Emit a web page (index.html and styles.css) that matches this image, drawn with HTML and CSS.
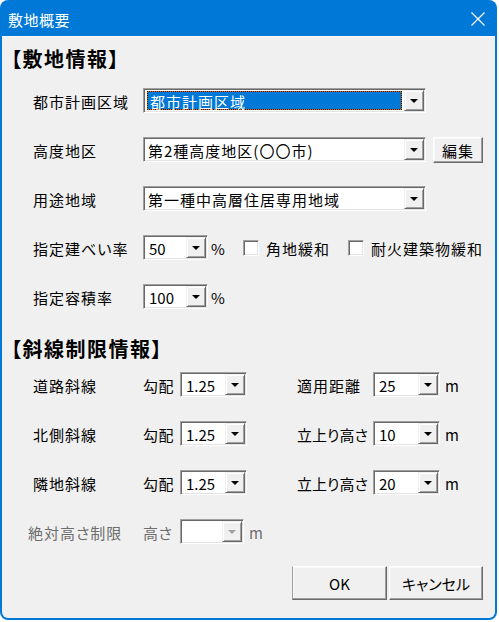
FILE: index.html
```html
<!DOCTYPE html>
<html lang="ja">
<head>
<meta charset="utf-8">
<title>敷地概要</title>
<link rel="stylesheet" href="styles.css">
</head>
<body>
<div class="window">
  <div class="titlebar">
    <span class="title">敷地概要</span>
    <svg class="close" viewBox="0 0 16 16"><path d="M1.5 1.5L14.5 14.5M14.5 1.5L1.5 14.5" stroke="#fff" stroke-width="1.2" fill="none"/></svg>
  </div>
  <div class="content">
    <div class="heading h1">【敷地情報】</div>
    <div class="section">
      <div class="row">
        <span class="label">都市計画区域</span>
        <div class="combo wide">
          <div class="field"><span class="sel">都市計画区域</span></div>
          <span class="drop"><i class="tri"></i></span>
        </div>
      </div>
      <div class="row">
        <span class="label">高度地区</span>
        <div class="combo wide">
          <div class="field"><span class="txt">第2種高度地区(〇〇市)</span></div>
          <span class="drop"><i class="tri"></i></span>
        </div>
        <button class="btn edit">編集</button>
      </div>
      <div class="row">
        <span class="label">用途地域</span>
        <div class="combo wide">
          <div class="field"><span class="txt">第一種中高層住居専用地域</span></div>
          <span class="drop"><i class="tri"></i></span>
        </div>
      </div>
      <div class="row">
        <span class="label">指定建べい率</span>
        <div class="combo small">
          <div class="field"><span class="num">50</span></div>
          <span class="drop"><i class="tri"></i></span>
        </div>
        <span class="pct">%</span>
        <span class="cb"></span><span class="cbtext">角地緩和</span>
        <span class="cb cb2"></span><span class="cbtext">耐火建築物緩和</span>
      </div>
      <div class="row">
        <span class="label">指定容積率</span>
        <div class="combo small">
          <div class="field"><span class="num">100</span></div>
          <span class="drop"><i class="tri"></i></span>
        </div>
        <span class="pct">%</span>
      </div>
    </div>

    <div class="heading h2">【斜線制限情報】</div>
    <div class="section">
      <div class="grid-row">
        <span class="label">道路斜線</span>
        <span class="sub">勾配</span>
        <div class="combo cell">
          <div class="field"><span class="num">1.25</span></div>
          <span class="drop"><i class="tri"></i></span>
        </div>
        <span></span>
        <span class="sub2">適用距離</span>
        <div class="combo cell">
          <div class="field"><span class="num">25</span></div>
          <span class="drop"><i class="tri"></i></span>
        </div>
        <span class="unit">m</span>
      </div>
      <div class="grid-row">
        <span class="label">北側斜線</span>
        <span class="sub">勾配</span>
        <div class="combo cell">
          <div class="field"><span class="num">1.25</span></div>
          <span class="drop"><i class="tri"></i></span>
        </div>
        <span></span>
        <span class="sub2 tight">立上り高さ</span>
        <div class="combo cell">
          <div class="field"><span class="num">10</span></div>
          <span class="drop"><i class="tri"></i></span>
        </div>
        <span class="unit">m</span>
      </div>
      <div class="grid-row">
        <span class="label">隣地斜線</span>
        <span class="sub">勾配</span>
        <div class="combo cell">
          <div class="field"><span class="num">1.25</span></div>
          <span class="drop"><i class="tri"></i></span>
        </div>
        <span></span>
        <span class="sub2 tight">立上り高さ</span>
        <div class="combo cell">
          <div class="field"><span class="num">20</span></div>
          <span class="drop"><i class="tri"></i></span>
        </div>
        <span class="unit">m</span>
      </div>
      <div class="grid-row disabled">
        <span class="label shift">絶対高さ制限</span>
        <span class="sub">高さ</span>
        <div class="combo cell narrow">
          <div class="field"></div>
          <span class="drop"><i class="tri"></i></span>
        </div>
        <span class="unit unit-near">m</span>
      </div>
    </div>

    <div class="buttons">
      <button class="btn ok">OK</button>
      <button class="btn cancel">キャンセル</button>
    </div>
  </div>
</div>
</body>
</html>
```

FILE: styles.css
```css
* { box-sizing: border-box; }
html, body { margin: 0; padding: 0; background: #ffffff; }
body {
  width: 499px;
  height: 622px;
  overflow: hidden;
  font-family: "Noto Sans CJK JP", "Noto Sans", sans-serif;
  font-size: 15px;
  color: #000;
  font-feature-settings: "palt";
}
.window {
  width: 497px;
  height: 620px;
  background: #0078d7;
  border-radius: 8px;
  padding: 0 2px 2px 2px;
  display: flex;
  flex-direction: column;
}
.titlebar {
  height: 36px;
  flex: none;
  display: flex;
  align-items: center;
  justify-content: space-between;
  padding: 0 9px 0 6px;
  color: #fff;
}
.title { font-size: 15px; letter-spacing: 0.5px; padding-top: 2px; }
.close { width: 16px; height: 16px; display: block; margin-top: 2px; }

.content {
  flex: 1;
  background: #f0f0f0;
  border-top: 1px solid #fafafa;
  border-radius: 0 0 6px 6px;
  padding: 8px 12px 0 31px;
  display: flex;
  flex-direction: column;
}
.heading {
  height: 28px;
  line-height: 28px;
  font-size: 20px;
  font-weight: 700;
  letter-spacing: 1.5px;
  margin-left: -22px;
}
.h1 { margin-bottom: 15px; }
.h2 { margin-top: 26px; margin-bottom: 9px; }
.section { display: flex; flex-direction: column; gap: 24px; }

.row { height: 25px; display: flex; align-items: center; }
.label { width: 110px; flex: none; letter-spacing: 1px; padding-top: 2px; }

.combo {
  height: 25px;
  flex: none;
  display: flex;
  background: #fff;
  border: 1px solid;
  border-color: #a0a0a0 #ffffff #ffffff #a0a0a0;
  box-shadow: inset 1px 1px 0 #696969, inset -1px -1px 0 #e3e3e3;
  padding: 1px;
}
.wide { width: 283px; }
.small { width: 65px; }
.cell { width: 67px; }
.narrow { width: 64px; }
.field {
  flex: 1;
  display: flex;
  align-items: center;
  padding: 1px 2px 1px 3px;
  min-width: 0;
  white-space: nowrap;
}
.txt { letter-spacing: 1px; padding-top: 1px; }
.num { padding-left: 1px; padding-top: 1px; }
.sel {
  flex: 1;
  align-self: stretch;
  display: flex;
  align-items: center;
  margin-left: -1px;
  padding: 1px 0 0 2px;
  color: #fff;
  letter-spacing: 1px;
  border: 1px dotted #2a1400;
  background: linear-gradient(#0078d7, #0078d7) padding-box, linear-gradient(#d2700f, #d2700f) border-box;
}
.drop {
  width: 20px;
  flex: none;
  display: flex;
  align-items: center;
  justify-content: center;
  background: #f0f0f0;
  border: 1px solid;
  border-color: #f0f0f0 #696969 #696969 #f0f0f0;
  box-shadow: inset 1px 1px 0 #ffffff, inset -1px -1px 0 #a0a0a0;
}
.tri {
  width: 0;
  height: 0;
  border-left: 4px solid transparent;
  border-right: 4px solid transparent;
  border-top: 4px solid #000;
}

.btn {
  font: inherit;
  color: #000;
  background: #f0f0f0;
  border: 1px solid;
  border-color: #ffffff #696969 #696969 #ffffff;
  box-shadow: inset -1px -1px 0 #a0a0a0, inset 1px 1px 0 #f8f8f8;
  border-radius: 0;
  padding: 0;
  display: flex;
  align-items: center;
  justify-content: center;
  margin: 0;
}
.edit { width: 53px; height: 26px; margin-left: 7px; letter-spacing: 1px; padding-top: 1px; }

.pct { width: 35px; flex: none; padding-left: 3px; padding-top: 1px; }
.cb {
  width: 16px;
  height: 16px;
  flex: none;
  background: #fff;
  border: 1px solid;
  border-color: #a0a0a0 #ffffff #ffffff #a0a0a0;
  box-shadow: inset 1px 1px 0 #696969, inset -1px -1px 0 #e3e3e3;
}
.cb2 { margin-left: 18px; }
.cbtext { margin-left: 7px; letter-spacing: 1px; padding-top: 2px; }

.grid-row {
  height: 25px;
  display: grid;
  grid-template-columns: 110px 37px 67px 50px 76px 67px auto;
  align-items: center;
}
.sub { letter-spacing: 0.5px; padding-top: 2px; }
.sub2 { letter-spacing: 1px; padding-top: 2px; white-space: nowrap; }
.tight { letter-spacing: 0; }
.unit { padding-left: 5px; padding-top: 1px; }
.unit-near { padding-left: 2px; grid-column: 4; }
.shift { margin-left: -5px; }
.disabled { color: #6d6d6d; }
.disabled .tri { border-top-color: #a0a0a0; }

.buttons {
  margin-top: 22px;
  display: flex;
  justify-content: flex-end;
  gap: 2px;
}
.ok { width: 95px; height: 34px; border-left-color: #a0a0a0; }
.cancel { width: 94px; height: 34px; }
```
